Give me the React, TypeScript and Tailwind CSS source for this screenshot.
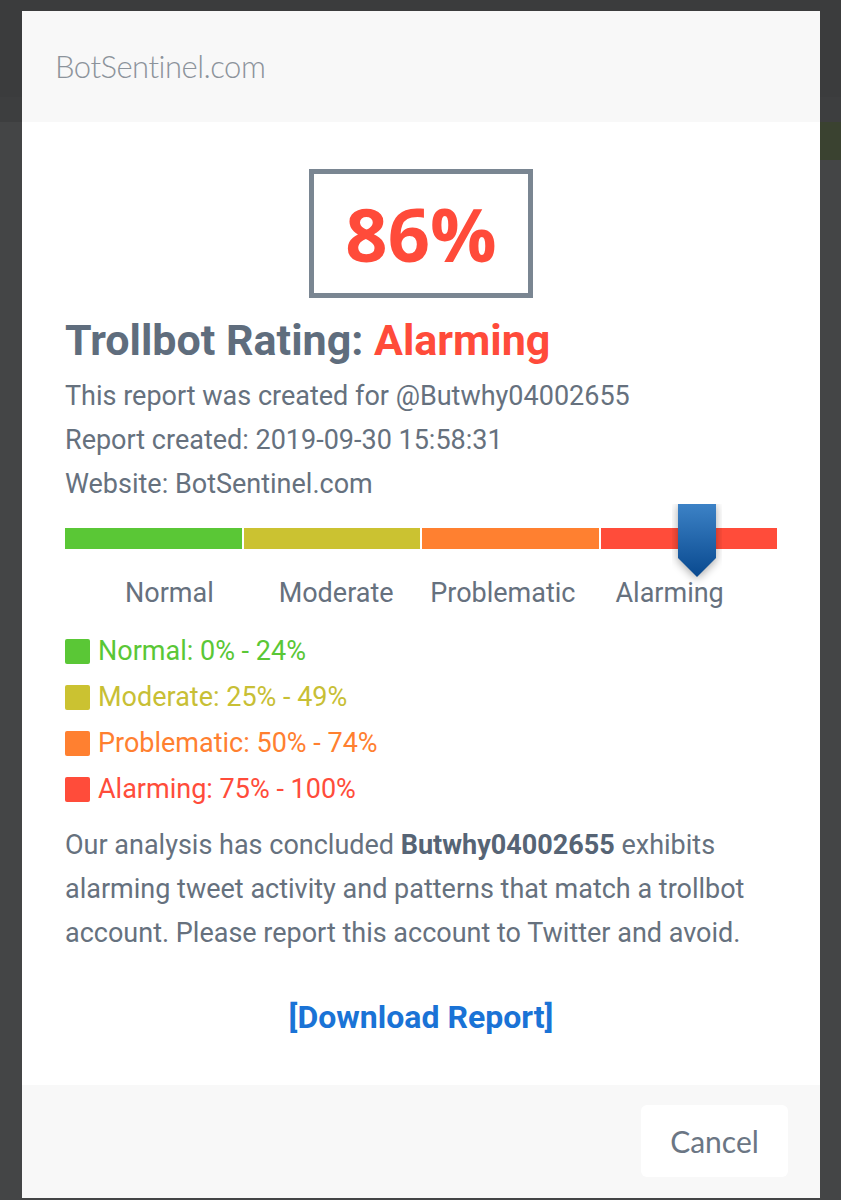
import React from "react";

const roboto = { fontFamily: "Roboto, 'Noto Sans', sans-serif" };

export default function App() {
  return (
    <div className="relative w-[841px] h-[1200px] overflow-hidden bg-[#3d3e3f]">
      {/* page behind the overlay */}
      <div className="h-[97px] bg-[#3b3c3d]" />
      <div className="h-[1103px] bg-[#444546]">
        <div className="ml-auto mt-[25px] h-[38px] w-[21px] bg-[#3a4230]" />
      </div>

      {/* modal */}
      <div className="absolute left-[22px] top-[11px] w-[798px] h-[1187px] flex flex-col bg-white">
        <div className="h-[111px] bg-[#f8f8f8] flex items-center pl-[33px]">
          <span
            className="text-[31px] font-light text-[#8c939b] tracking-[-0.5px]"
            style={{ fontFamily: "Lato, 'Open Sans', sans-serif" }}
          >
            BotSentinel.com
          </span>
        </div>

        <div className="flex-1 px-[43px] pt-[47px]" style={roboto}>
          <div className="flex justify-center">
            <div className="w-[224px] h-[129px] border-[5px] border-[#7a8692] flex items-center justify-center">
              <span
                className="text-[74px] font-bold text-[#ff4b3a] leading-none"
                style={{ fontFamily: "'Open Sans', sans-serif" }}
              >
                86%
              </span>
            </div>
          </div>

          <h1 className="mt-[14px] text-[43px] font-bold leading-[56px] text-[#5f6d7d]">
            Trollbot Rating: <span className="text-[#ff4b3a]">Alarming</span>
          </h1>

          <div className="mt-[6px] text-[27px] leading-[44px] text-[#66717e]">
            <div>This report was created for @Butwhy04002655</div>
            <div>Report created: 2019-09-30 15:58:31</div>
            <div>Website: BotSentinel.com</div>
          </div>

          {/* rating bar */}
          <div className="relative mt-[22px] h-[21px] flex gap-[2px]">
            <div className="flex-1 bg-[#5ac736]" />
            <div className="flex-1 bg-[#cbc231]" />
            <div className="flex-1 bg-[#ff8030]" />
            <div className="flex-1 bg-[#ff4c3a]" />
            <svg
              className="absolute left-[607px] top-[-24px]"
              width="50"
              height="82"
              viewBox="0 0 50 82"
            >
              <defs>
                <linearGradient id="mk" x1="0" y1="0" x2="0" y2="1">
                  <stop offset="0" stopColor="#3c82c6" />
                  <stop offset="1" stopColor="#09498f" />
                </linearGradient>
                <filter id="sh" x="-80%" y="-30%" width="260%" height="160%">
                  <feGaussianBlur stdDeviation="5" />
                </filter>
              </defs>
              <path d="M6 1 H44 V56 L25 75 L6 56 Z" fill="#000" opacity="0.35" filter="url(#sh)" />
              <path d="M6 0 H44 V54 L25 73 L6 54 Z" fill="url(#mk)" />
            </svg>
          </div>

          <div className="grid grid-cols-4 pl-[21px] pr-[24px] mt-[28px] text-[27px] leading-[32px] text-[#66717e] text-center">
            <div>Normal</div>
            <div>Moderate</div>
            <div>Problematic</div>
            <div>Alarming</div>
          </div>

          {/* legend */}
          <div className="mt-[26px] flex flex-col gap-[14px] text-[27px] leading-[32px]">
            <div className="flex items-center gap-[8px] text-[#5ac736]">
              <span className="w-[25px] h-[25px] rounded-[2px] bg-[#5ac736]" />
              Normal: 0% - 24%
            </div>
            <div className="flex items-center gap-[8px] text-[#c8bf35]">
              <span className="w-[25px] h-[25px] rounded-[2px] bg-[#cbc231]" />
              Moderate: 25% - 49%
            </div>
            <div className="flex items-center gap-[8px] text-[#ff8030]">
              <span className="w-[25px] h-[25px] rounded-[2px] bg-[#ff8030]" />
              Problematic: 50% - 74%
            </div>
            <div className="flex items-center gap-[8px] text-[#ff4c3a]">
              <span className="w-[25px] h-[25px] rounded-[2px] bg-[#ff4c3a]" />
              Alarming: 75% - 100%
            </div>
          </div>

          <p className="mt-[18px] text-[27px] leading-[44px] text-[#66717e]">
            Our analysis has concluded{" "}
            <b className="font-bold text-[#566475]">Butwhy04002655</b> exhibits
            alarming tweet activity and patterns that match a trollbot account.
            Please report this account to Twitter and avoid.
          </p>

          <div className="mt-[42px] text-center">
            <span className="text-[32px] font-bold text-[#1a73d6] leading-[40px]">
              [Download Report]
            </span>
          </div>
        </div>

        <div className="h-[113px] bg-[#f8f8f8] flex justify-end pt-[20px] pr-[32px]">
          <div className="w-[147px] h-[72px] rounded-[6px] bg-white flex items-center justify-center">
            <span
              className="text-[30px] text-[#6b7684]"
              style={{ fontFamily: "Lato, 'Open Sans', sans-serif" }}
            >
              Cancel
            </span>
          </div>
        </div>
      </div>
    </div>
  );
}
